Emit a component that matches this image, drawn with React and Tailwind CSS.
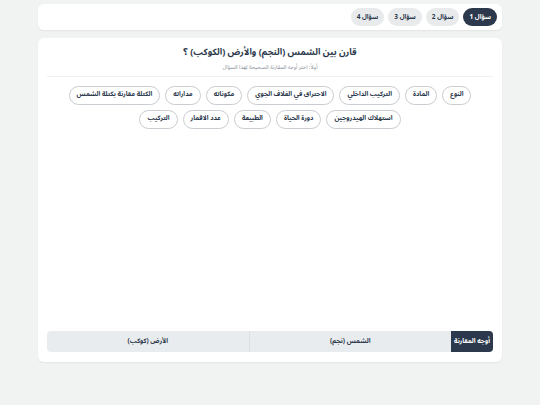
import React from 'react';

const tabs = ['سؤال 1', 'سؤال 2', 'سؤال 3', 'سؤال 4'];
const chips = [
  'النوع',
  'المادة',
  'التركيب الداخلي',
  'الاحتراق في الغلاف الجوي',
  'مكوناته',
  'مداراته',
  'الكتلة مقارنة بكتلة الشمس',
  'استهلاك الهيدروجين',
  'دورة الحياة',
  'الطبيعة',
  'عدد الاقمار',
  'التركيب',
];

export default function App() {
  return (
    <div
      dir="rtl"
      className="min-h-[405px] bg-[#f1f3f3] pt-[4px]"
      style={{ fontFamily: '"Noto Sans Arabic", "DejaVu Sans", sans-serif' }}
    >
      <div className="mx-auto w-[464px] flex flex-col gap-[8px]">
        <div className="bg-white rounded-[6px] shadow-[0_1px_2px_rgba(0,0,0,0.06)] px-[5px] py-[4px] flex gap-[4px]">
          {tabs.map((t, i) => (
            <button
              key={t}
              className={
                'h-[18px] px-[6px] rounded-full text-[6.5px] font-bold leading-none ' +
                (i === 0 ? 'bg-[#2c394c] text-white' : 'bg-[#e8eaec] text-[#2c394c]')
              }
            >
              {t}
            </button>
          ))}
        </div>

        <div className="bg-white rounded-[6px] shadow-[0_1px_2px_rgba(0,0,0,0.06)] h-[324px] flex flex-col px-[9px] pt-[8px] pb-[10px]">
          <div className="text-center">
            <h1 className="text-[9px] font-bold text-[#2c394c] leading-normal">
              قارن بين الشمس (النجم) والأرض (الكوكب) ؟
            </h1>
            <p className="text-[5.5px] text-[#8a9099] mt-[3px] leading-normal">
              أولاً: اختر أوجه المقارنة الصحيحة لهذا السؤال
            </p>
          </div>
          <div className="h-px bg-[#eef0f1] mt-[5px]" />

          <div className="flex flex-wrap justify-center gap-x-[5px] gap-y-[5px] mt-[9px]">
            {chips.map((c) => (
              <span
                key={c}
                className="h-[19px] px-[7px] flex items-center rounded-full border border-[#c9cdd1] text-[6.5px] font-bold text-[#2c394c] whitespace-nowrap"
              >
                {c}
              </span>
            ))}
          </div>

          <div className="flex-1" />

          <div className="flex h-[21px] rounded-[4px] overflow-hidden bg-[#e9ecee] text-[6.5px] font-bold text-[#2c394c]">
            <div className="w-[42px] bg-[#2c394c] text-white flex items-center justify-center">
              أوجه المقارنة
            </div>
            <div className="flex-1 flex items-center justify-center border-l border-[#dcdfe2]">
              الشمس (نجم)
            </div>
            <div className="flex-1 flex items-center justify-center">
              الأرض (كوكب)
            </div>
          </div>
        </div>
      </div>
    </div>
  );
}
